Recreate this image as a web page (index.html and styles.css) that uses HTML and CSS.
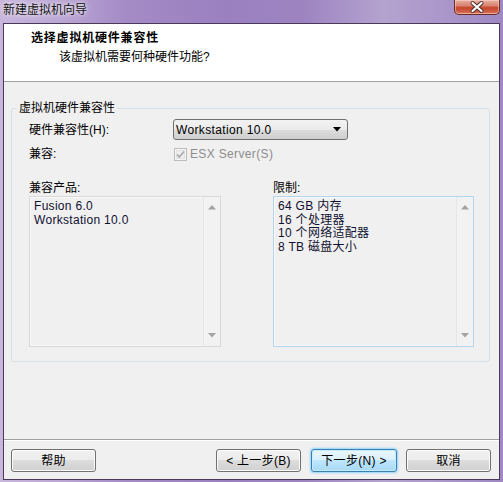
FILE: index.html
```html
<!DOCTYPE html>
<html>
<head>
<meta charset="utf-8">
<link rel="stylesheet" href="styles.css">
</head>
<body>
<div class="window">
  <div class="titlebar">
    <span class="title">新建虚拟机向导</span>
    <div class="close">
      <svg width="44" height="14" viewBox="0 0 44 14">
        <path d="M17.5 3 L26.5 11 M26.5 3 L17.5 11" stroke="#4a2a2a" stroke-width="4" stroke-linecap="round" fill="none"/>
        <path d="M17.5 3 L26.5 11 M26.5 3 L17.5 11" stroke="#ffffff" stroke-width="2.2" stroke-linecap="round" fill="none"/>
      </svg>
    </div>
  </div>
  <div class="client">
    <div class="header">
      <div class="h-title">选择虚拟机硬件兼容性</div>
      <div class="h-sub">该虚拟机需要何种硬件功能?</div>
    </div>
    <div class="main">
      <fieldset class="group">
        <legend>虚拟机硬件兼容性</legend>
        <div class="form">
          <span class="label">硬件兼容性(H):</span>
          <div class="combo">
            <span class="latin">Workstation 10.0</span>
            <svg width="8" height="5" viewBox="0 0 8 5"><polygon points="0,0 8,0 4,4.5" fill="#000"/></svg>
          </div>
          <span class="label">兼容:</span>
          <div class="check">
            <svg width="13" height="13" viewBox="0 0 13 13">
              <rect x="0.5" y="0.5" width="12" height="12" fill="#f4f4f4" stroke="#bdbdbd"/>
              <rect x="2.5" y="2.5" width="8" height="8" fill="#eeeeee" stroke="#e2e2e2"/>
              <path d="M3 6.5 L5.3 9 L10 3.5" stroke="#a9a9a9" stroke-width="1.6" fill="none"/>
            </svg>
            <span class="disabled latin">ESX Server(S)</span>
          </div>
        </div>
        <div class="lists">
          <div class="col">
            <div class="label list-label">兼容产品:</div>
            <div class="listbox">
              <div class="items">
                <div>Fusion 6.0</div>
                <div>Workstation 10.0</div>
              </div>
              <div class="scroll">
                <svg width="8" height="5" viewBox="0 0 8 5"><polygon points="0,4.5 8,4.5 4,0" fill="#a3a3a3"/></svg>
                <svg width="8" height="5" viewBox="0 0 8 5"><polygon points="0,0 8,0 4,4.5" fill="#a3a3a3"/></svg>
              </div>
            </div>
          </div>
          <div class="col">
            <div class="label list-label">限制:</div>
            <div class="listbox focused">
              <div class="items">
                <div>64 GB 内存</div>
                <div>16 个处理器</div>
                <div>10 个网络适配器</div>
                <div>8 TB 磁盘大小</div>
              </div>
              <div class="scroll">
                <svg width="8" height="5" viewBox="0 0 8 5"><polygon points="0,4.5 8,4.5 4,0" fill="#a3a3a3"/></svg>
                <svg width="8" height="5" viewBox="0 0 8 5"><polygon points="0,0 8,0 4,4.5" fill="#a3a3a3"/></svg>
              </div>
            </div>
          </div>
        </div>
      </fieldset>
    </div>
    <div class="footer">
      <button class="btn btn-help">帮助</button>
      <button class="btn btn-back">&lt; 上一步(B)</button>
      <button class="btn btn-next">下一步(N) &gt;</button>
      <button class="btn btn-cancel">取消</button>
    </div>
  </div>
</div>
</body>
</html>
```

FILE: styles.css
```css
html, body {
  margin: 0;
  padding: 0;
}

body {
  font-family: "Liberation Sans", "Noto Sans CJK SC", sans-serif;
  font-size: 12px;
  color: #000;
  background: #ffffff;
}

.window {
  width: 503px;
  height: 482px;
  box-sizing: border-box;
  padding: 0 3px 2px 3px;
  display: flex;
  flex-direction: column;
  background: linear-gradient(to right, #c9b6dc 0%, #bba6d4 12%, #a48bc6 25%, #9a80bf 45%, #9d84c1 60%, #b4a2cf 76%, #ab97ca 88%, #9f88c3 100%);
}

.titlebar {
  height: 23px;
  flex: none;
  display: flex;
  justify-content: space-between;
  align-items: flex-start;
}

.title {
  line-height: 20px;
  font-size: 12px;
  color: #111;
  text-shadow: 0 0 6px rgba(255, 255, 255, 0.9), 0 0 3px rgba(255, 255, 255, 0.7);
}

.close {
  width: 44px;
  height: 14px;
  border: 1px solid #6a2c25;
  border-top: none;
  border-radius: 0 0 5px 5px;
  background: linear-gradient(#e9b0a2 0%, #d9836f 40%, #c6452c 55%, #d06047 85%, #dc8468 100%);
  box-shadow: inset 0 0 0 1px rgba(255, 220, 210, 0.5);
}

.close svg {
  display: block;
}

.client {
  flex: 1;
  display: flex;
  flex-direction: column;
  background: #f0f0f0;
  border: 1px solid #4a3a5a;
  min-height: 0;
}

.header {
  height: 57px;
  flex: none;
  background: #ffffff;
  border-bottom: 1px solid #a0a0a0;
}

.h-title {
  margin-top: 6px;
  padding-left: 27px;
  line-height: 16px;
  font-weight: bold;
  letter-spacing: 0.8px;
}

.h-sub {
  margin-top: 3px;
  padding-left: 55px;
  line-height: 16px;
}

.main {
  flex: 1;
}

.group {
  margin: 19px 9px 0 7px;
  padding: 4px 15px 14px 17px;
  border: 1px solid #d5dfe5;
  border-radius: 3px;
  min-width: 0;
}

.group legend {
  margin-left: -12px;
  padding: 0 2px;
  line-height: 14px;
}

.form {
  display: grid;
  grid-template-columns: 144px 175px;
  grid-template-rows: 21px 20px;
  row-gap: 4px;
  align-items: center;
}

.label {
  line-height: 14px;
}

.latin {
  letter-spacing: 0.35px;
}

.combo {
  height: 21px;
  box-sizing: border-box;
  border: 1px solid #707070;
  border-radius: 3px;
  background: linear-gradient(#f2f2f2 0%, #ebebeb 50%, #dddddd 50%, #cfcfcf 100%);
  display: flex;
  align-items: center;
  justify-content: space-between;
  padding: 0 6px 0 2px;
}

.combo svg {
  display: block;
}

.check {
  display: flex;
  align-items: center;
  gap: 3px;
  padding-left: 1px;
}

.check svg {
  display: block;
}

.disabled {
  color: #8d8d8d;
}

.lists {
  display: grid;
  grid-template-columns: 192px 201px;
  column-gap: 52px;
  margin-top: 17px;
}

.list-label {
  margin-bottom: 1px;
}

.listbox {
  height: 151px;
  box-sizing: border-box;
  border: 1px solid #d9d9d9;
  box-shadow: inset 0 0 0 1px #f8f8f8;
  background: #f0f0f0;
  display: flex;
}

.listbox.focused {
  border-color: #b3d5ee;
}

.items {
  flex: 1;
  padding: 3px 0 0 4px;
  line-height: 13.5px;
  color: #101030;
  letter-spacing: 0.3px;
}

.scroll {
  width: 16px;
  flex: none;
  border-left: 1px solid #e6e6e6;
  background: #f2f2f2;
  display: flex;
  flex-direction: column;
  justify-content: space-between;
  align-items: center;
  padding: 8px 0;
}

.scroll svg {
  display: block;
}

.footer {
  flex: none;
  height: 40px;
  box-sizing: border-box;
  border-top: 1px solid #a0a0a0;
  box-shadow: inset 0 1px 0 #ffffff;
  display: flex;
  align-items: flex-start;
  padding: 9px 8px 0 7px;
}

.btn {
  height: 23px;
  width: 85px;
  box-sizing: border-box;
  border: 1px solid #707070;
  border-radius: 3px;
  background: linear-gradient(#f2f2f2 0%, #ebebeb 50%, #dddddd 50%, #cfcfcf 100%);
  box-shadow: inset 0 0 0 1px #fcfcfc;
  font-family: "Liberation Sans", "Noto Sans CJK SC", sans-serif;
  font-size: 12px;
  color: #000;
  padding: 0;
  line-height: 20px;
  letter-spacing: 0.3px;
}

.btn-back {
  margin-left: auto;
}

.btn-next {
  width: 86px;
  margin-left: 10px;
  border-color: #3c7fb1;
  background: linear-gradient(#eaf6fd 0%, #d9f0fc 50%, #bee6fd 50%, #a7d9f5 100%);
  box-shadow: inset 0 0 0 1px #c4ecff, 0 0 2px 1px #8fd4fa;
}

.btn-cancel {
  margin-left: 9px;
}
```
